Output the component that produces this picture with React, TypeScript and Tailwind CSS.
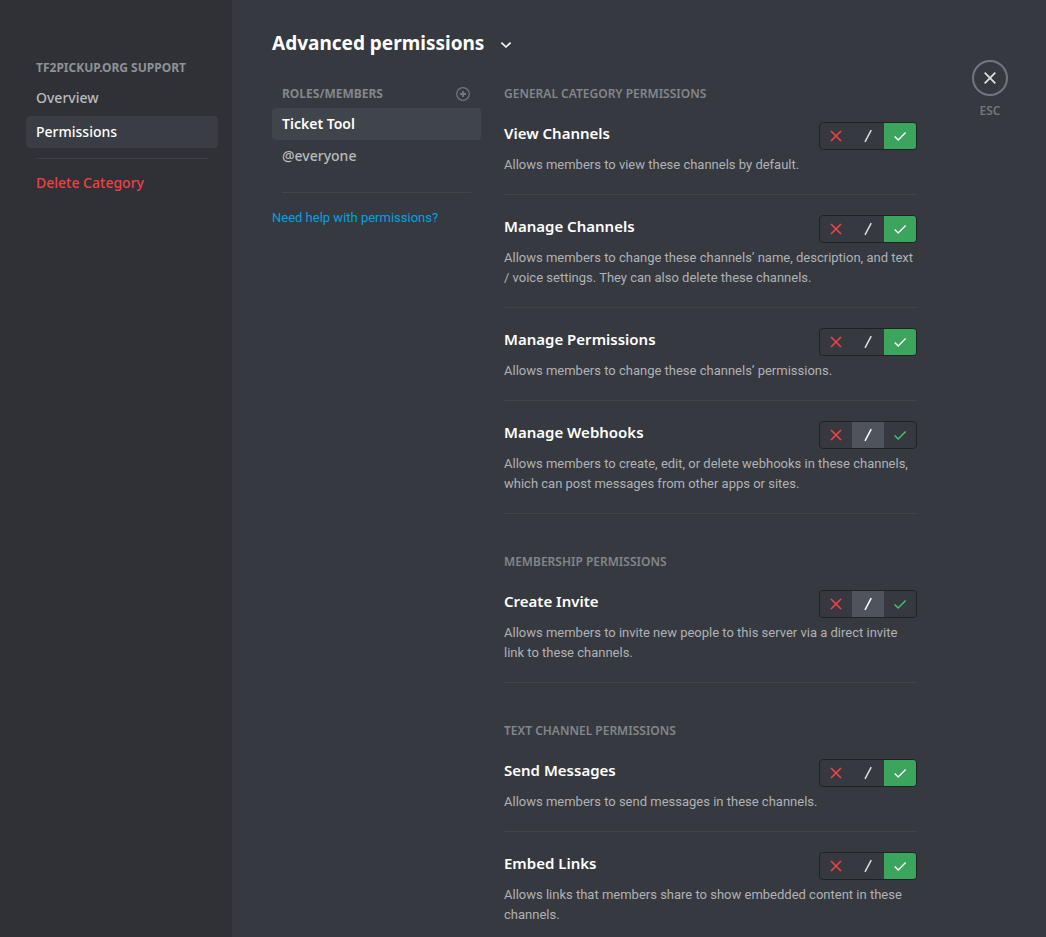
import { useState } from "react";

type Value = "deny" | "neutral" | "allow";

interface Permission {
  name: string;
  description: string;
  initial: Value;
}

interface Section {
  title: string;
  permissions: Permission[];
}

const sections: Section[] = [
  {
    title: "General category permissions",
    permissions: [
      {
        name: "View Channels",
        description: "Allows members to view these channels by default.",
        initial: "allow",
      },
      {
        name: "Manage Channels",
        description:
          "Allows members to change these channels’ name, description, and text / voice settings. They can also delete these channels.",
        initial: "allow",
      },
      {
        name: "Manage Permissions",
        description: "Allows members to change these channels’ permissions.",
        initial: "allow",
      },
      {
        name: "Manage Webhooks",
        description:
          "Allows members to create, edit, or delete webhooks in these channels, which can post messages from other apps or sites.",
        initial: "neutral",
      },
    ],
  },
  {
    title: "Membership permissions",
    permissions: [
      {
        name: "Create Invite",
        description:
          "Allows members to invite new people to this server via a direct invite link to these channels.",
        initial: "neutral",
      },
    ],
  },
  {
    title: "Text channel permissions",
    permissions: [
      {
        name: "Send Messages",
        description: "Allows members to send messages in these channels.",
        initial: "allow",
      },
      {
        name: "Embed Links",
        description:
          "Allows links that members share to show embedded content in these channels.",
        initial: "allow",
      },
    ],
  },
];

function CrossIcon() {
  return (
    <svg width="16" height="16" viewBox="0 0 16 16" fill="none" stroke="currentColor" strokeWidth="1.7" aria-hidden="true">
      <path d="M3 3L13 13M13 3L3 13" />
    </svg>
  );
}

function SlashIcon() {
  return (
    <svg width="16" height="16" viewBox="0 0 16 16" fill="none" stroke="currentColor" strokeWidth="1.5" aria-hidden="true">
      <path d="M11.2 2.2L5 13.8" />
    </svg>
  );
}

function CheckIcon() {
  return (
    <svg width="16" height="16" viewBox="0 0 16 16" fill="none" stroke="currentColor" strokeWidth="1.4" aria-hidden="true">
      <path d="M2.7 8.4L6.2 11.9L13.6 4.4" />
    </svg>
  );
}

function Toggle({ label, initial }: { label: string; initial: Value }) {
  const [value, setValue] = useState<Value>(initial);
  return (
    <div
      role="group"
      aria-label={label}
      className="flex h-7 shrink-0 overflow-hidden rounded-sm border border-[#202225]"
    >
      <button
        type="button"
        aria-label="Deny"
        aria-pressed={value === "deny"}
        onClick={() => setValue("deny")}
        className={`flex w-8 items-center justify-center ${value === "deny" ? "bg-[#ed4245] text-white" : "text-[#ed4245]"}`}
      >
        <CrossIcon />
      </button>
      <button
        type="button"
        aria-label="Neutral"
        aria-pressed={value === "neutral"}
        onClick={() => setValue("neutral")}
        className={`flex w-8 items-center justify-center ${value === "neutral" ? "bg-[#4f545c] text-white" : "text-[#dcddde]"}`}
      >
        <SlashIcon />
      </button>
      <button
        type="button"
        aria-label="Allow"
        aria-pressed={value === "allow"}
        onClick={() => setValue("allow")}
        className={`flex w-8 items-center justify-center ${value === "allow" ? "bg-[#3ba55d] text-white" : "text-[#46c46e]"}`}
      >
        <CheckIcon />
      </button>
    </div>
  );
}

function PermissionRow({ permission }: { permission: Permission }) {
  return (
    <div className="mt-5 border-b border-[#42454a] pb-[19px]">
      <div className="flex h-7 items-start justify-between gap-4">
        <h3 className="text-[15px] leading-5.5 font-semibold text-white">{permission.name}</h3>
        <Toggle label={permission.name} initial={permission.initial} />
      </div>
      <p className="mt-[5px] font-['Roboto',sans-serif] text-[13px] leading-5 text-[#b0b2b6]">
        {permission.description}
      </p>
    </div>
  );
}

export default function App() {
  return (
    <div className="flex h-screen overflow-hidden bg-[#36393f] font-['Noto_Sans',sans-serif] text-white">
      <nav aria-label="Category settings" className="w-58 shrink-0 bg-[#2f3136] pt-15 pr-3.5 pl-6.5">
        <h2 className="px-2.5 text-xs leading-4 font-bold text-[#8e9297] uppercase">tf2pickup.org support</h2>
        <a href="#overview" className="mt-1.5 flex h-8 items-center rounded px-2.5 text-sm font-medium text-[#b9bbbe]">
          Overview
        </a>
        <a
          href="#permissions"
          aria-current="page"
          className="mt-0.5 flex h-8 items-center rounded bg-[#3a3d44] px-2.5 text-sm font-medium text-white"
        >
          Permissions
        </a>
        <hr className="mx-2.5 mt-2.5 border-[#3d3f45]" />
        <button
          type="button"
          className="mt-2 flex h-8 w-full items-center rounded px-2.5 text-sm font-medium text-[#ed4245]"
        >
          Delete Category
        </button>
      </nav>

      <main className="min-w-0 flex-1 pl-10">
        <h1 className="pt-[29px]">
          <button type="button" className="flex items-center gap-3.5 text-[19px] leading-7 font-bold">
            Advanced permissions
            <svg width="16" height="16" viewBox="0 0 16 16" fill="none" stroke="currentColor" strokeWidth="1.6" aria-hidden="true">
              <path d="M3.4 7.6L8 12L12.6 7.6" />
            </svg>
          </button>
        </h1>
        <div className="mt-[29px] flex">
          <section className="w-[209px] shrink-0" aria-label="Roles and members">
            <div className="flex items-center justify-between px-2.5 text-xs leading-4 font-bold text-[#83868b]">
              <h2>ROLES/MEMBERS</h2>
              <button type="button" aria-label="Add role or member" className="text-[#72767d]">
                <svg width="16" height="16" viewBox="0 0 16 16" fill="none" stroke="currentColor" aria-hidden="true">
                  <circle cx="8" cy="8" r="6.3" strokeWidth="1.2" />
                  <path d="M8 5V11M5 8H11" strokeWidth="1.8" />
                </svg>
              </button>
            </div>
            <button
              type="button"
              className="mt-1.5 flex h-8 w-full items-center rounded bg-[#40444b] px-2.5 text-sm font-semibold"
            >
              Ticket Tool
            </button>
            <button
              type="button"
              className="flex h-8 w-full items-center rounded px-2.5 text-sm font-medium text-[#b9bbbe]"
            >
              @everyone
            </button>
            <hr className="mx-2.5 mt-5 border-[#42454a]" />
            <a href="#help" className="mt-[15px] block font-['Roboto',sans-serif] text-[13px] leading-5 text-[#00a3e0]">
              Need help with permissions?
            </a>
          </section>

          <div className="ml-[23px] min-w-0 flex-1">
            {sections.map((section) => (
              <section key={section.title} className="mb-10">
                <h2 className="text-xs leading-4 font-semibold text-[#83868b] uppercase">{section.title}</h2>
                {section.permissions.map((permission) => (
                  <PermissionRow key={permission.name} permission={permission} />
                ))}
              </section>
            ))}
          </div>
        </div>
      </main>

      <div className="mt-15 mr-9.5 ml-[55px] flex w-9 shrink-0 flex-col items-center gap-[7px]">
        <button
          type="button"
          aria-label="Close"
          className="flex size-9 items-center justify-center rounded-full border-2 border-[#72767d] text-[#dcddde]"
        >
          <svg width="18" height="18" viewBox="0 0 18 18" fill="none" stroke="currentColor" strokeWidth="1.8" aria-hidden="true">
            <path d="M3.7 3.7L14.3 14.3M14.3 3.7L3.7 14.3" />
          </svg>
        </button>
        <span className="text-xs leading-4 font-semibold text-[#72767d]">ESC</span>
      </div>
    </div>
  );
}
